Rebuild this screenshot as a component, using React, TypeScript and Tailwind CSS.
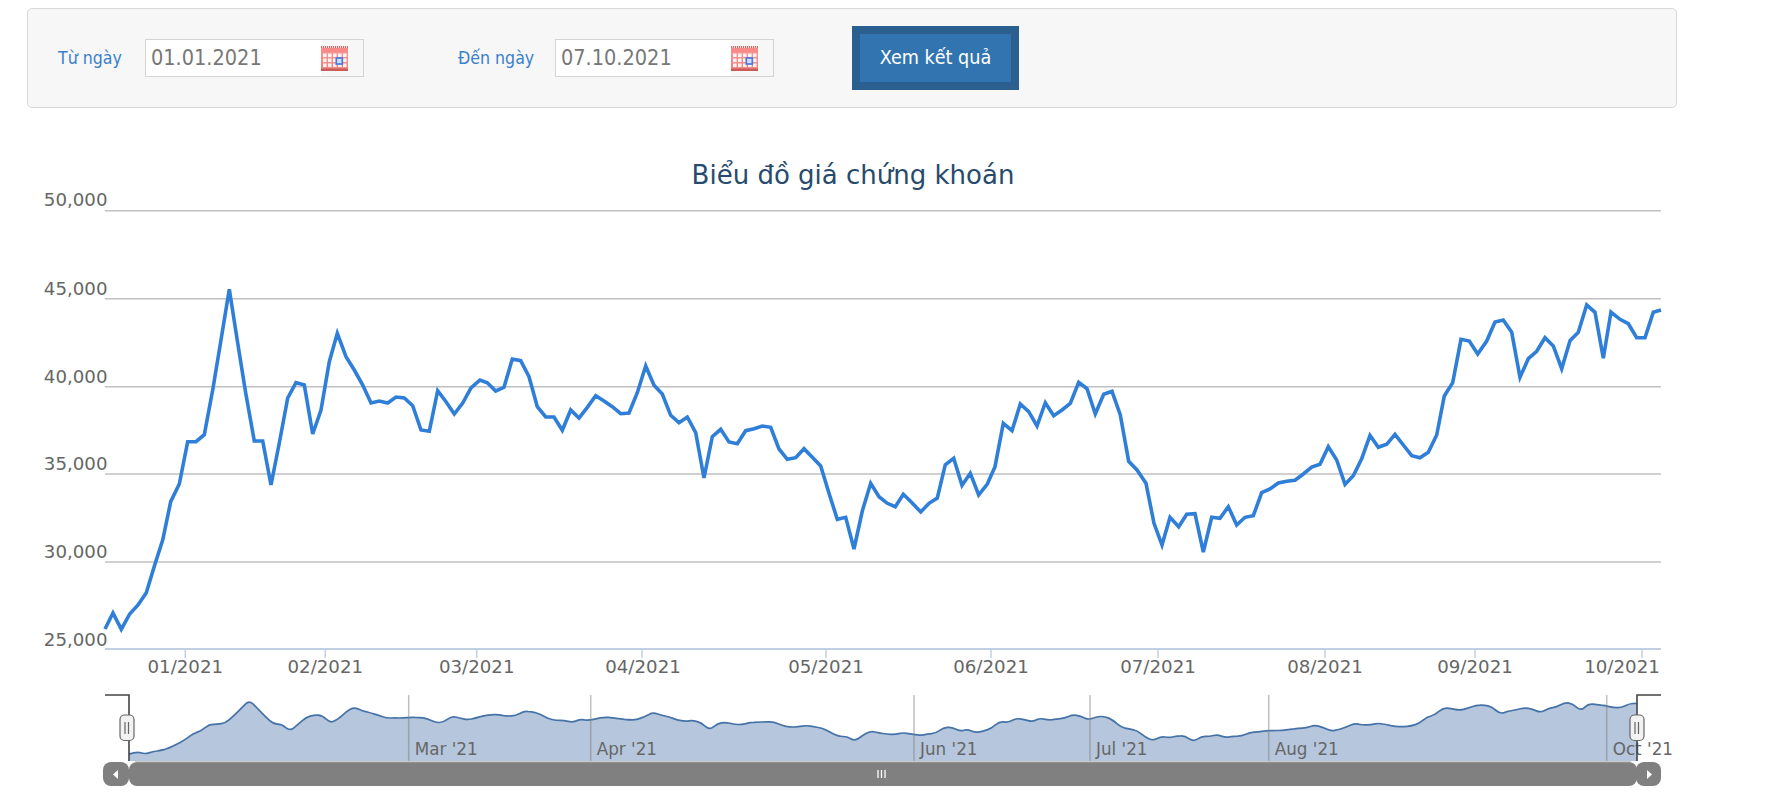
import React from "react";

const RAW = "105,629 113,613 121.3,629.3 129.7,614 138,605 146.3,592.7 154.7,565 162.7,540 170.7,501.7 179.3,484 187.7,441.7 196,441.7 204.3,434.7 212.7,390 221,340 229.3,289.3 237.7,343 245.7,393 254.3,441 262.7,441 271,485 279.3,443 287.7,398 296,382.7 304.3,385 312.7,434 321,410 329.3,361.7 337.3,333.3 346,356.7 354.3,370 362.7,385 371,403 379.3,401 387.7,403 396,397 404.3,398 412.7,405.7 421,430 429.3,431.3 437.7,390.7 446,401.7 454.3,414 462.7,403 471,388 480,380 487.3,382.7 495.7,391 504,387.3 512.3,359 520.7,360.7 529,376.7 537.3,406.7 545.7,417 554,417 562.3,430.3 570.7,410 579,418 587.3,407.3 595.7,395.7 604,401 612.3,406.7 620.7,413.7 629,413 637.3,392.7 645.7,366 654,385.3 662.3,394 670.7,415.3 679,422.7 687.3,417 695.7,432.7 704,478 712.3,436.7 720.7,429.3 729,442 737.3,443.7 745.7,430.7 754,428.7 762.3,426 770.7,427.3 779,449 787.3,459.3 795.7,457.7 804,448.7 812.3,457.3 820.7,466 829,493.3 837.3,519.3 845.7,517.3 854,549 862.3,511 870.7,483.3 879,496.7 887.3,503.3 895.3,506.7 903.3,494.3 912,502.7 920.7,512 929,503.3 937.3,498 945.3,464.7 953.7,458.3 962,485.3 970.3,473.3 978.7,495 987.3,484 995,466.7 1003.3,423.3 1012,430.7 1020.3,404 1028.7,411.7 1037,426 1045.3,402.7 1053.7,415.7 1062,410 1070.3,403.3 1078.7,382.3 1087,388.7 1095.3,414 1103.7,394.3 1112,391.3 1120.3,415 1128.7,461.3 1137,470 1146,483.3 1154,523.3 1162,545 1170,517.3 1178.7,526.7 1186.7,514.3 1195,513.7 1203.3,552 1211.7,517.3 1220,518.3 1228.3,506.7 1236.7,525 1245,517.3 1253.3,515.7 1261.7,492.7 1270,489 1278.3,483 1286.7,481.3 1295,480.3 1303.3,474 1311.7,467 1320,464.3 1328.3,446.7 1336.7,460 1345,484.3 1353.3,475.7 1361.7,458.7 1370,435.3 1378.3,447.3 1386.7,444.3 1395,434.3 1403.3,445 1411.7,455.7 1420,457.7 1428.3,452.3 1436.7,435 1444.3,396 1452.7,382.7 1461,339.3 1469.3,341 1477.7,354 1486.7,341 1495,322 1503.3,320 1511.7,332.3 1520,377.3 1528.3,358.7 1536.7,351.3 1545,337.7 1553.3,346 1561.7,368.7 1570,340.7 1578.3,332.3 1586.7,305 1595,312.3 1603.3,358.3 1611,312 1620,319.3 1628.3,323.7 1636.7,337.7 1645,337.7 1653.3,312.3 1661,310";

const navPts = RAW.split(" ").map((p) => {
  const [x, y] = p.split(",").map(Number);
  return [129 + (x - 105) * 0.969, 700 + (y - 289) * 0.159];
});
let navLine = `M${navPts[0][0].toFixed(1)} ${navPts[0][1].toFixed(1)}`;
for (let i = 1; i < navPts.length - 1; i++) {
  const mx = (navPts[i][0] + navPts[i + 1][0]) / 2;
  const my = (navPts[i][1] + navPts[i + 1][1]) / 2;
  navLine += ` Q${navPts[i][0].toFixed(1)} ${navPts[i][1].toFixed(1)} ${mx.toFixed(1)} ${my.toFixed(1)}`;
}
navLine += ` L${navPts[navPts.length - 1][0].toFixed(1)} ${navPts[navPts.length - 1][1].toFixed(1)}`;
const navArea = `${navLine} L1637 761 L129 761 Z`;

const GRID = [210.7, 298.7, 386.7, 474, 562];
const YLABELS: [string, number][] = [["50,000", 206], ["45,000", 295], ["40,000", 383], ["35,000", 470], ["30,000", 558], ["25,000", 646]];
const XLABELS: [string, number, number][] = [["01/2021", 185.3, 185.3], ["02/2021", 325.3, 325.3], ["03/2021", 476.7, 476.7], ["04/2021", 642, 643], ["05/2021", 826, 826], ["06/2021", 991, 991], ["07/2021", 1158, 1158], ["08/2021", 1325, 1325], ["09/2021", 1475, 1475], ["10/2021", 1642, 1622]];
const NAV: [string, number][] = [["Mar '21", 408.7], ["Apr '21", 590.7], ["Jun '21", 914], ["Jul '21", 1090], ["Aug '21", 1268.7], ["Oct '21", 1606.7]];
const FONT = "'DejaVu Sans', sans-serif";

function CalendarIcon({ id }: { id: string }) {
  const cols = [2, 7, 12, 17, 22];
  const rows = [7.5, 12.5, 17.5];
  return (
    <svg width="27" height="25" viewBox="0 0 27 25" className="shrink-0">
      <defs>
        <linearGradient id={id} x1="0" y1="0" x2="0" y2="1">
          <stop offset="0" stopColor="#fb9a9a" />
          <stop offset="1" stopColor="#ee7e78" />
        </linearGradient>
      </defs>
      <rect x="0" y="0" width="27" height="25" fill={`url(#${id})`} />
      <rect x="0" y="0" width="27" height="2" fill="#c96a66" />
      {Array.from({ length: 13 }).map((_, i) => (
        <rect key={i} x={1 + i * 2} y="0" width="1" height="2" fill="#fff" opacity="0.75" />
      ))}
      <rect x="0" y="2" width="27" height="4" fill="#f58a88" />
      {rows.map((r) => cols.map((c) => <rect key={`${r}-${c}`} x={c} y={r} width="3.6" height="3.6" fill="#fff" opacity="0.9" />))}
      <rect x="15.3" y="12" width="6" height="6" fill="#cfe0fb" stroke="#4a78dc" strokeWidth="1.7" />
      <rect x="0" y="22.6" width="27" height="2.4" fill="#c95c58" />
    </svg>
  );
}

function DateInput({ value, id }: { value: string; id: string }) {
  return (
    <div className="flex h-[38px] w-[219px] items-center border border-[#d4d4d4]">
      <div className="flex h-full w-[175px] items-center bg-white pl-[5px] pt-[1px] text-[21.5px] text-[#777]">{value}</div>
      <CalendarIcon id={id} />
    </div>
  );
}

export default function App() {
  return (
    <div className="min-h-[802px] w-full bg-white pt-2 font-['DejaVu_Sans_Condensed','DejaVu_Sans',sans-serif]">
      <div className="ml-[27px] flex h-[100px] w-[1650px] items-center rounded-[5px] border border-[#d8d8d8] bg-[#f7f7f7]">
        <span className="ml-[30px] w-[87px] text-[17.6px] text-[#3a80cc]">Từ ngày</span>
        <DateInput value="01.01.2021" id="calA" />
        <span className="ml-[94px] w-[97px] text-[17.6px] text-[#3a80cc]">Đến ngày</span>
        <DateInput value="07.10.2021" id="calB" />
        <button className="ml-[78px] h-[64px] w-[167px] border-[8px] border-[#2a5f8f] bg-[#3174b0] text-[19.6px] text-white">Xem kết quả</button>
      </div>
      <svg width="1792" height="694" viewBox="0 108 1792 694" className="block" style={{ fontFamily: FONT }}>
        <text x="853" y="184" textAnchor="middle" fontSize="26" fill="#274b6d">Biểu đồ giá chứng khoán</text>
        {GRID.map((y) => (
          <line key={y} x1="105" x2="1661" y1={y} y2={y} stroke="#c0c0c0" strokeWidth="1.6" />
        ))}
        <line x1="105" x2="1661" y1="649" y2="649" stroke="#c0d0e0" strokeWidth="2" />
        {XLABELS.map(([t, tick, x]) => (
          <g key={t}>
            <line x1={tick} x2={tick} y1="649" y2="658" stroke="#c0d0e0" strokeWidth="1.5" />
            <text x={x} y="673" textAnchor="middle" fontSize="18.2" fill="#666">{t}</text>
          </g>
        ))}
        {YLABELS.map(([t, y]) => (
          <text key={t} x="107.5" y={y} textAnchor="end" fontSize="18.2" fill="#666">{t}</text>
        ))}
        <polyline points={RAW} fill="none" stroke="#2f7ed8" strokeWidth="3.6" strokeLinejoin="miter" />

        <path d={navArea} fill="#b5c6dd" />
        <path d={navLine} fill="none" stroke="#4572a7" strokeWidth="1.7" />
        {NAV.map(([t, x]) => (
          <g key={t}>
            <line x1={x} x2={x} y1="695" y2="761" stroke="#808080" strokeOpacity="0.5" strokeWidth="1.5" />
            <text x={x + 6} y="755" fontSize="16.8" fill="#666">{t}</text>
          </g>
        ))}
        <path d="M105 695 H129 V761" fill="none" stroke="#444" strokeWidth="1.6" />
        <path d="M1661 695 H1637 V761" fill="none" stroke="#444" strokeWidth="1.6" />
        {[127, 1637].map((x) => (
          <g key={x}>
            <rect x={x - 7} y="715" width="14" height="25.5" rx="4.5" fill="#f2f2f2" stroke="#666" strokeWidth="1.2" />
            <line x1={x - 2} x2={x - 2} y1="722" y2="734" stroke="#666" strokeWidth="1.2" />
            <line x1={x + 1.5} x2={x + 1.5} y1="722" y2="734" stroke="#666" strokeWidth="1.2" />
          </g>
        ))}
        <rect x="103" y="762" width="26" height="24" rx="8" fill="#808080" />
        <rect x="129" y="762" width="1508" height="24" rx="8" fill="#808080" />
        <rect x="1636" y="762" width="25" height="24" rx="8" fill="#808080" />
        <line x1="135" x2="1631" y1="761.5" y2="761.5" stroke="#c8c8c8" strokeWidth="1.4" />
        <path d="M118 770 L113 774.5 L118 779 Z" fill="#fff" />
        <path d="M1647 770 L1652 774.5 L1647 779 Z" fill="#fff" />
        {[878, 881.5, 885].map((x) => (
          <line key={x} x1={x} x2={x} y1="770" y2="778" stroke="#fff" strokeWidth="1.3" />
        ))}
      </svg>
    </div>
  );
}
